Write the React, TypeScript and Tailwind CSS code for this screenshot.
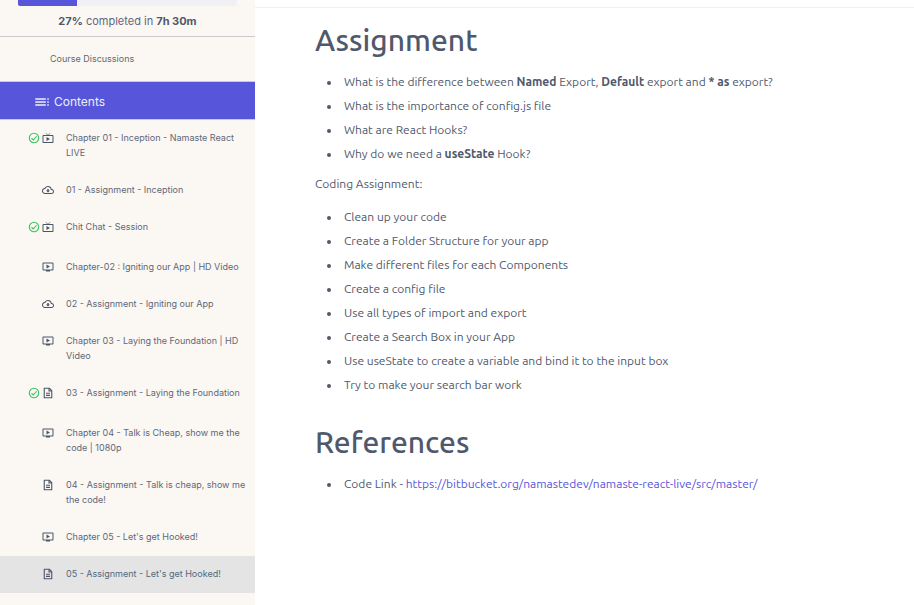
import type { ReactNode } from "react";
import {
  MdLiveTv,
  MdOndemandVideo,
  MdOutlineCloudDownload,
  MdToc,
} from "react-icons/md";

type Kind = "live" | "download" | "video" | "doc";

interface Lesson {
  title: string;
  kind: Kind;
  done?: boolean;
  active?: boolean;
}

const lessons: Lesson[] = [
  { title: "Chapter 01 - Inception - Namaste React LIVE", kind: "live", done: true },
  { title: "01 - Assignment - Inception", kind: "download" },
  { title: "Chit Chat - Session", kind: "live", done: true },
  { title: "Chapter-02 : Igniting our App | HD Video", kind: "video" },
  { title: "02 - Assignment - Igniting our App", kind: "download" },
  { title: "Chapter 03 - Laying the Foundation | HD Video", kind: "video" },
  { title: "03 - Assignment - Laying the Foundation", kind: "doc", done: true },
  { title: "Chapter 04 - Talk is Cheap, show me the code | 1080p", kind: "video" },
  { title: "04 - Assignment - Talk is cheap, show me the code!", kind: "doc" },
  { title: "Chapter 05 - Let's get Hooked!", kind: "video" },
  { title: "05 - Assignment - Let's get Hooked!", kind: "doc", active: true },
];

function CheckIcon() {
  return (
    <svg viewBox="0 0 24 24" className="size-3 text-[#35c45a]" fill="none" stroke="currentColor" strokeWidth="2.2" aria-hidden="true">
      <circle cx="12" cy="12" r="9.4" />
      <path d="M7 12.5l3.5 3.5 6.7-7.5" />
    </svg>
  );
}

function DocIcon() {
  return (
    <svg viewBox="0 0 24 24" className="size-3" fill="none" stroke="currentColor" strokeWidth="2.2" aria-hidden="true">
      <path d="M14.5 2.5H4.5v19h15V7.5z" strokeLinejoin="round" />
      <path d="M14 2.5V8h5.5M8 12.5h8M8 16.8h8" />
    </svg>
  );
}

function KindIcon({ kind }: { kind: Kind }) {
  if (kind === "live") return <MdLiveTv className="size-3" />;
  if (kind === "video") return <MdOndemandVideo className="size-3" />;
  if (kind === "download") return <MdOutlineCloudDownload className="size-3" />;
  return <DocIcon />;
}

function LessonRow({ lesson }: { lesson: Lesson }) {
  return (
    <li>
      <a
        href="#lesson"
        className={`flex items-start pt-2.5 pr-1 pb-3 pl-7 ${lesson.active ? "bg-[#e4e4e4] text-[#506a80]" : ""} ${lesson.done ? "min-h-10" : ""}`}
      >
        <span className="flex h-[15px] w-[26px] shrink-0 items-center justify-end gap-0.5 text-[#4b5468]">
          {lesson.done && <CheckIcon />}
          <KindIcon kind={lesson.kind} />
        </span>
        <span className="ml-3 flex-1 leading-[15px]">{lesson.title}</span>
      </a>
    </li>
  );
}

function Sidebar() {
  return (
    <aside className="w-[255px] shrink-0 bg-[#fbf8f3] font-['Inter',sans-serif] text-[9px] text-[#5f677a]">
      <div className="border-b border-[#c9cbd0] px-[18px] pb-1.5">
        <div className="h-1.5 rounded-b-xs bg-[#f0f0f5]">
          <div className="h-full w-[27%] rounded-bl-xs bg-[#5755d9]" />
        </div>
        <p className="pt-[7px] text-center text-[11px] leading-[17px]">
          <b className="font-bold text-[#50596c]">27%</b> completed in <b className="font-bold text-[#50596c]">7h 30m</b>
        </p>
      </div>
      <a href="#discussions" className="block border-b border-[#c9cbd0] py-[14px] pl-[50px] leading-4 text-[#66696b]">
        Course Discussions
      </a>
      <h2 className="flex h-[38px] items-center gap-[3px] border-b border-[#c9cbd0] bg-[#5755d9] pt-0.5 pl-[33px] text-[12px] text-[#eeeefb]">
        <MdToc className="size-[18px]" />
        Contents
      </h2>
      <ul>
        {lessons.map((lesson) => (
          <LessonRow key={lesson.title} lesson={lesson} />
        ))}
      </ul>
    </aside>
  );
}

function Bullets({ children }: { children: ReactNode }) {
  return <ul className="pl-[29px]">{children}</ul>;
}

function Bullet({ children }: { children: ReactNode }) {
  return (
    <li className="before:mr-[13px] before:-ml-[17px] before:inline-block before:size-1 before:rounded-full before:bg-current before:align-middle">
      {children}
    </li>
  );
}

export default function App() {
  return (
    <div className="flex min-h-screen bg-white">
      <Sidebar />
      <main className="min-w-0 flex-1 font-['Ubuntu','Noto_Sans',sans-serif] text-[12px] leading-6 text-[#50596c]">
        <div className="h-2 border-b border-[#f0f0f2]" />
        <article className="px-[60px]">
          <h1 className="pt-3 pb-2.5 text-[30px] leading-10 font-medium">Assignment</h1>
          <Bullets>
            <Bullet>What is the difference between <b>Named</b> Export, <b>Default</b> export and <b>* as</b> export?</Bullet>
            <Bullet>What is the importance of config.js file</Bullet>
            <Bullet>What are React Hooks?</Bullet>
            <Bullet>Why do we need a <b>useState</b> Hook?</Bullet>
          </Bullets>
          <p className="pt-1.5 pb-[9px]">Coding Assignment:</p>
          <Bullets>
            <Bullet>Clean up your code</Bullet>
            <Bullet>Create a Folder Structure for your app</Bullet>
            <Bullet>Make different files for each Components</Bullet>
            <Bullet>Create a config file</Bullet>
            <Bullet>Use all types of import and export</Bullet>
            <Bullet>Create a Search Box in your App</Bullet>
            <Bullet>Use useState to create a variable and bind it to the input box</Bullet>
            <Bullet>Try to make your search bar work</Bullet>
          </Bullets>
          <h1 className="pt-[25px] pb-2.5 text-[30px] leading-10 font-medium">References</h1>
          <Bullets>
            <Bullet>
              Code Link -{" "}
              <a href="https://bitbucket.org/namastedev/namaste-react-live/src/master/" className="text-[#5755d9]">
                https://bitbucket.org/namastedev/namaste-react-live/src/master/
              </a>
            </Bullet>
          </Bullets>
        </article>
      </main>
    </div>
  );
}
